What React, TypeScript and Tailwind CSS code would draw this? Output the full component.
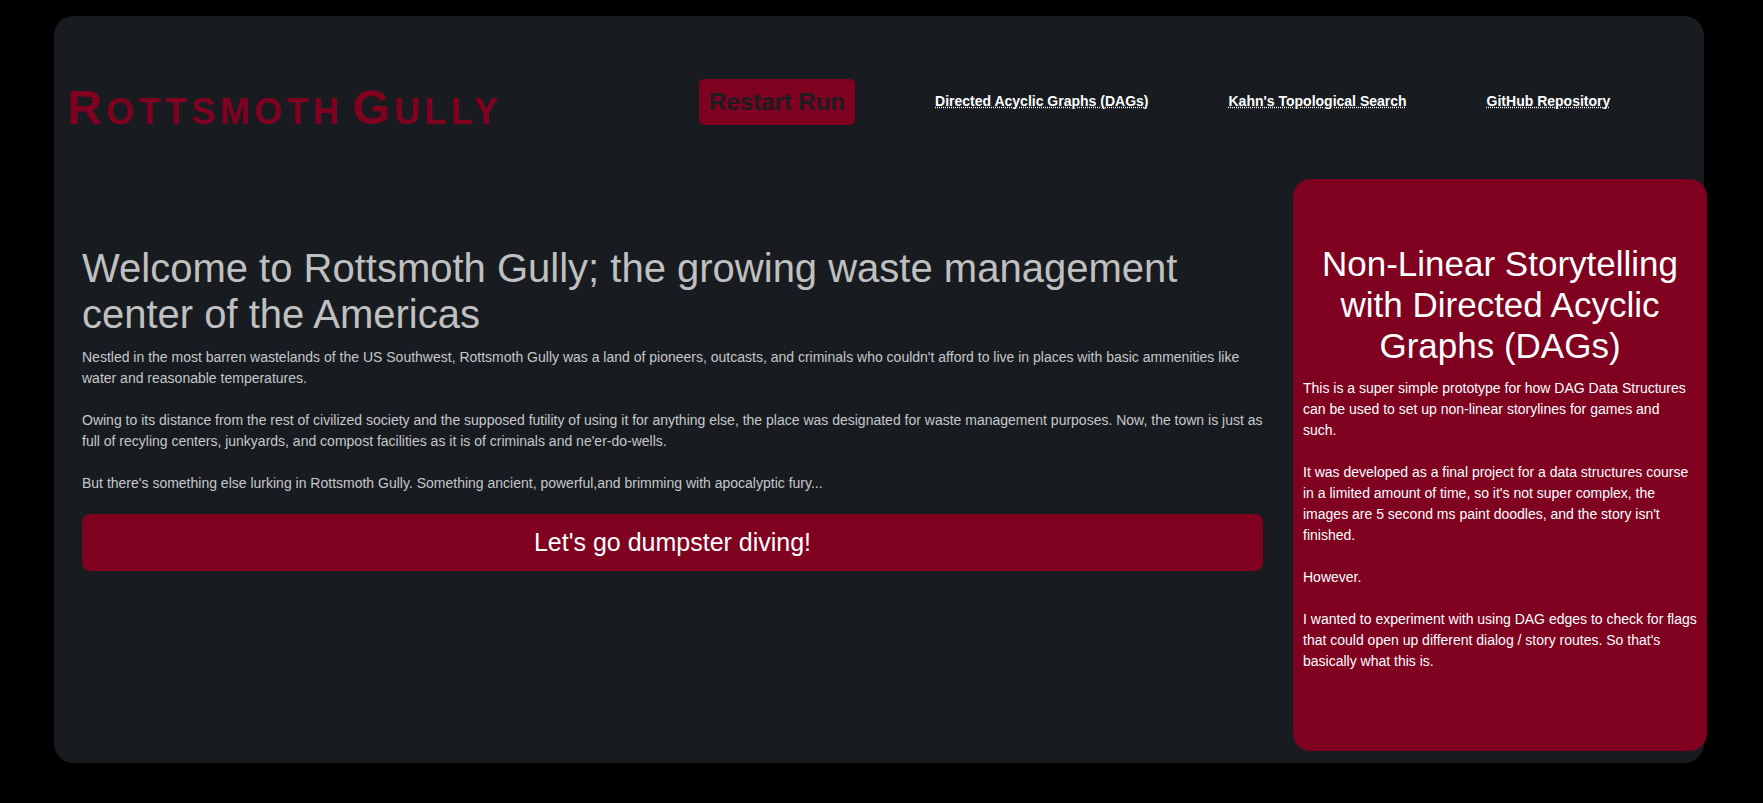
import React from 'react'

const NAV_LINKS = [
  'Directed Acyclic Graphs (DAGs)',
  "Kahn's Topological Search",
  'GitHub Repository',
]

const INTRO = [
  "Nestled in the most barren wastelands of the US Southwest, Rottsmoth Gully was a land of pioneers, outcasts, and criminals who couldn't afford to live in places with basic ammenities like water and reasonable temperatures.",
  'Owing to its distance from the rest of civilized society and the supposed futility of using it for anything else, the place was designated for waste management purposes. Now, the town is just as full of recyling centers, junkyards, and compost facilities as it is of criminals and ne\'er-do-wells.',
  "But there's something else lurking in Rottsmoth Gully. Something ancient, powerful,and brimming with apocalyptic fury...",
]

const ABOUT = [
  "It was developed as a final project for a data structures course in a limited amount of time, so it's not super complex, the images are 5 second ms paint doodles, and the story isn't finished.",
  'However.',
  "I wanted to experiment with using DAG edges to check for flags that could open up different dialog / story routes. So that's basically what this is.",
]

// Small-caps title: first letter of each word full size, the rest smaller
const SmallCapsWord = ({ word }: { word: string }) => (
  <span>
    <span className="text-[48px]">{word[0]}</span>
    <span className="text-[36px] uppercase">{word.slice(1)}</span>
  </span>
)

/**
 * App - Rottsmoth Gully landing page
 * Header with title + nav, intro column on the left, DAG info card on the right
 */
export default function App() {
  return (
    <div className="min-h-screen bg-black pl-[54px] pt-[16px] font-['Liberation_Sans',Arial,sans-serif]">
      <div className="w-[1650px] h-[747px] rounded-[20px] bg-[#181c20] pt-[56px]">
        {/* Header */}
        <header className="flex items-center h-[60px]">
          <div className="w-[645px] shrink-0 pl-[13px]">
            <h1 className="font-bold tracking-[4.4px] text-[#800020] leading-[55px] pt-[21px] whitespace-nowrap">
              <SmallCapsWord word="Rottsmoth" /> <SmallCapsWord word="Gully" />
            </h1>
          </div>
          <nav className="flex items-center gap-[80px]">
            <button className="px-[10px] py-[9px] rounded-[5px] bg-[#800020] text-[#1a1d21] text-[24px] font-bold leading-[28px]">
              Restart Run
            </button>
            {NAV_LINKS.map((link) => (
              <a
                key={link}
                href="#"
                className="text-white text-[14px] font-bold underline decoration-dotted -mt-[1px]"
              >
                {link}
              </a>
            ))}
          </nav>
        </header>

        {/* Content */}
        <div className="flex mt-[47px]">
          {/* Intro column */}
          <main className="w-[1181px] shrink-0 ml-[28px] pt-[66px]">
            <h2 className="text-[40px] leading-[46px] text-[#c0c0c0]">
              Welcome to Rottsmoth Gully; the growing waste management center of the Americas
            </h2>
            <div className="mt-[10px] space-y-[21px]">
              {INTRO.map((p, i) => (
                <p key={i} className="text-[14px] leading-[21px] text-[#c6c8ca]">
                  {p}
                </p>
              ))}
            </div>
            <button className="mt-[20px] w-full h-[57px] rounded-[8px] bg-[#800020] text-white text-[25px]">
              Let's go dumpster diving!
            </button>
          </main>

          {/* DAG info card */}
          <aside className="w-[414px] h-[572px] shrink-0 ml-[30px] rounded-[18px] bg-[#800020] px-[10px] pt-[64px]">
            <h2 className="text-[35px] leading-[41px] text-white text-center">
              Non-Linear Storytelling with Directed Acyclic Graphs (DAGs)
            </h2>
            <div className="mt-[12px] space-y-[21px]">
              <p className="text-[14px] leading-[21px] text-white">
                This is a super simple prototype for how DAG Data Structures can be used to set up non-linear storylines for games and
                <br />
                such.
              </p>
              {ABOUT.map((p, i) => (
                <p key={i} className="text-[14px] leading-[21px] text-white">
                  {p}
                </p>
              ))}
            </div>
          </aside>
        </div>
      </div>
    </div>
  )
}
